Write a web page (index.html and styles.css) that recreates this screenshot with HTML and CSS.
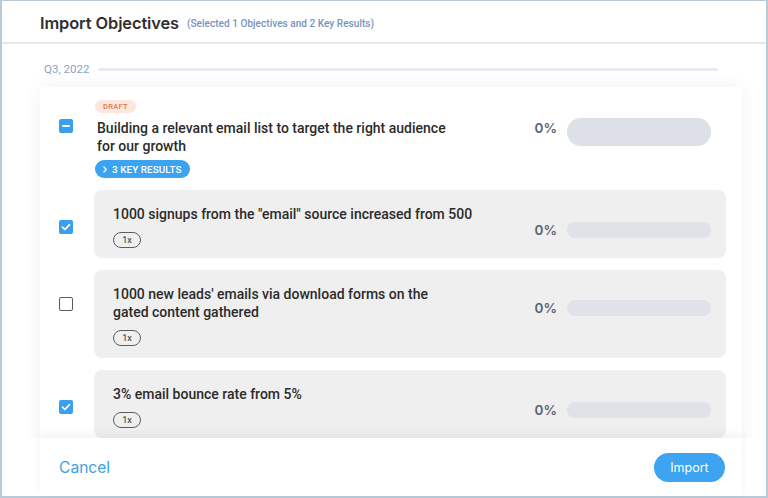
FILE: index.html
```html
<!DOCTYPE html>
<html>
<head>
<meta charset="utf-8">
<link rel="stylesheet" href="styles.css">
</head>
<body>
<div class="frame">
  <header class="header">
    <h1 class="title">Import Objectives</h1>
    <span class="subtitle">(Selected 1 Objectives and 2 Key Results)</span>
  </header>
  <main class="main">
    <div class="period">
      <span class="period-label">Q3, 2022</span>
      <span class="period-line"></span>
    </div>
    <section class="card">
      <div class="objective">
        <div class="obj-check"><span class="cb cb-ind"></span></div>
        <div class="obj-body">
          <span class="draft">DRAFT</span>
          <div class="obj-row">
            <p class="obj-text">Building a relevant email list to target the right audience for our growth</p>
            <div class="progress">
              <span class="pct">0%</span>
              <span class="bar bar-lg"></span>
            </div>
          </div>
          <span class="kr-pill"><svg class="chev" viewBox="0 0 6 8" width="5" height="7"><path d="M1 1l3 3-3 3" fill="none" stroke="#fff" stroke-width="1.4" stroke-linecap="round" stroke-linejoin="round"/></svg>3 KEY RESULTS</span>
        </div>
      </div>

      <div class="kr">
        <div class="kr-check c1"><span class="cb cb-on"><svg viewBox="0 0 14 14" width="14" height="14"><path d="M3.5 7.2l2.4 2.3 4.6-4.8" fill="none" stroke="#fff" stroke-width="1.7" stroke-linecap="round" stroke-linejoin="round"/></svg></span></div>
        <div class="kr-box">
          <div class="kr-left">
            <p class="kr-text">1000 signups from the "email" source increased from 500</p>
            <span class="mult">1x</span>
          </div>
          <div class="progress kr-progress">
            <span class="pct">0%</span>
            <span class="bar bar-sm"></span>
          </div>
        </div>
      </div>

      <div class="kr">
        <div class="kr-check c2"><span class="cb cb-off"></span></div>
        <div class="kr-box tall">
          <div class="kr-left">
            <p class="kr-text narrow">1000 new leads' emails via download forms on the gated content gathered</p>
            <span class="mult">1x</span>
          </div>
          <div class="progress kr-progress p2">
            <span class="pct">0%</span>
            <span class="bar bar-sm"></span>
          </div>
        </div>
      </div>

      <div class="kr">
        <div class="kr-check c1"><span class="cb cb-on"><svg viewBox="0 0 14 14" width="14" height="14"><path d="M3.5 7.2l2.4 2.3 4.6-4.8" fill="none" stroke="#fff" stroke-width="1.7" stroke-linecap="round" stroke-linejoin="round"/></svg></span></div>
        <div class="kr-box">
          <div class="kr-left">
            <p class="kr-text">3% email bounce rate from 5%</p>
            <span class="mult">1x</span>
          </div>
          <div class="progress kr-progress">
            <span class="pct">0%</span>
            <span class="bar bar-sm"></span>
          </div>
        </div>
      </div>
    </section>
  </main>
  <footer class="footer">
    <a class="cancel">Cancel</a>
    <button class="import">Import</button>
  </footer>
</div>
</body>
</html>
```

FILE: styles.css
```css
* { box-sizing: border-box; }
html, body { margin: 0; padding: 0; }
body {
  width: 768px;
  height: 498px;
  overflow: hidden;
  background: #fff;
  font-family: Roboto, "Liberation Sans", sans-serif;
}
.frame {
  width: 768px;
  height: 498px;
  border: 2px solid #b9c9d5;
  border-top-width: 1px;
  display: flex;
  flex-direction: column;
  background: #fff;
  position: relative;
}
.header {
  height: 43px;
  flex: none;
  border-bottom: 2px solid #e4e8ef;
  display: flex;
  align-items: center;
  padding-left: 38px;
  padding-top: 2px;
  gap: 8px;
}
.title {
  margin: 0;
  font-family: Inter, "Open Sans", sans-serif;
  font-weight: 600;
  font-size: 16.4px;
  color: #2f2f33;
  letter-spacing: -0.1px;
}
.subtitle {
  font-family: Roboto, sans-serif;
  font-weight: 500;
  font-size: 10.1px;
  color: #7a93bb;
  padding-top: 2px;
}
.main {
  flex: 1;
  overflow: hidden;
  padding: 0 24px 0 38px;
  position: relative;
}
.period {
  height: 43px;
  display: flex;
  align-items: center;
  padding-left: 4px;
  padding-top: 7px;
  gap: 9px;
}
.period-label {
  font-size: 11.5px;
  color: #8ea2c1;
}
.period-line {
  flex: 1;
  height: 3px;
  background: #e8ebf1;
  border-radius: 2px;
  margin-right: 24px;
}
.card {
  background: #fff;
  box-shadow: 0 0 18px rgba(0, 0, 0, 0.06);
  padding: 13px 16px 40px 0;
  display: flex;
  flex-direction: column;
  gap: 12px;
}
.objective {
  display: flex;
}
.obj-check {
  width: 54px;
  flex: none;
  padding-left: 19px;
  padding-top: 19px;
}
.obj-body {
  flex: 1;
  display: flex;
  flex-direction: column;
  align-items: flex-start;
  padding-left: 1px;
  padding-right: 15px;
}
.draft {
  display: inline-block;
  height: 13px;
  line-height: 13px;
  padding: 0 8px;
  border-radius: 7px;
  background: #fde7dd;
  color: #d6784f;
  font-size: 7.5px;
  font-weight: 500;
  letter-spacing: 0.3px;
}
.obj-row {
  align-self: stretch;
  display: flex;
  justify-content: space-between;
  align-items: flex-start;
  margin-top: 6px;
}
.obj-text {
  margin: 0;
  width: 362px;
  padding-left: 2px;
  font-size: 14px;
  font-weight: 500;
  line-height: 18px;
  color: #2b2b2b;
}
.progress {
  display: flex;
  align-items: center;
  gap: 10px;
}
.pct {
  font-family: Inter, "Open Sans", sans-serif;
  font-weight: 600;
  font-size: 13.5px;
  color: #5b6370;
  line-height: 18px;
}
.bar {
  display: block;
  width: 144px;
  background: #dde0e7;
}
.bar-lg {
  height: 28px;
  border-radius: 14px;
  margin-top: -1px;
}
.obj-row .progress { align-items: flex-start; }
.bar-sm {
  height: 16px;
  border-radius: 8px;
  background: #dfe2e9;
}
.kr-pill {
  display: inline-flex;
  align-items: center;
  gap: 4px;
  height: 18px;
  margin-top: 5px;
  padding: 0 9px 0 8px;
  border-radius: 9px;
  background: #3ca3f0;
  color: #fff;
  font-size: 9.8px;
  font-weight: 500;
  letter-spacing: 0.1px;
}
.chev { display: block; }
.cb {
  display: block;
  width: 14px;
  height: 14px;
  border-radius: 2px;
}
.cb svg { display: block; }
.cb-on { background: #3b9ff0; }
.cb-ind {
  background: #3b9ff0;
  position: relative;
}
.cb-ind::after {
  content: "";
  position: absolute;
  left: 3px;
  right: 3px;
  top: 6px;
  height: 2px;
  border-radius: 1px;
  background: #fff;
}
.cb-off {
  background: #fff;
  border: 1.5px solid #555a60;
}
.kr {
  display: flex;
}
.kr-check {
  width: 54px;
  flex: none;
  padding-left: 19px;
}
.kr-check.c1 { padding-top: 30px; }
.kr-check.c2 { padding-top: 27px; }
.kr-box {
  flex: 1;
  background: #efefef;
  border-radius: 8px;
  display: flex;
  justify-content: space-between;
  align-items: flex-start;
  padding: 15px 15px 10px 19px;
}
.kr-box.tall { padding-bottom: 12px; }
.kr-left {
  flex: 1;
  display: flex;
  flex-direction: column;
  align-items: flex-start;
}
.kr-text {
  margin: 0;
  max-width: 372px;
  font-size: 14px;
  font-weight: 500;
  line-height: 18px;
  color: #2b2b2b;
}
.kr-text.narrow { max-width: 345px; }
.mult {
  margin-top: 9px;
  display: inline-block;
  width: 28px;
  height: 16px;
  line-height: 14px;
  text-align: center;
  border: 1px solid #5a5e63;
  border-radius: 8px;
  font-size: 9px;
  font-weight: 500;
  color: #55595e;
}
.kr-progress { margin-top: 16px; }
.kr-progress.p2 { margin-top: 14px; }
.footer {
  flex: none;
  height: 58px;
  margin: 0 24px 0 38px;
  background: #fff;
  box-shadow: 0 -3px 8px rgba(0, 0, 0, 0.06);
  display: flex;
  align-items: center;
  justify-content: space-between;
  padding: 1px 17px 0 19px;
  position: relative;
  z-index: 2;
}
.cancel {
  font-family: Inter, "Open Sans", sans-serif;
  font-size: 15.6px;
  color: #3d9fe5;
}
.import {
  border: none;
  height: 29px;
  width: 71px;
  border-radius: 15px;
  background: #3ca4f0;
  color: #fff;
  font-family: Inter, "Open Sans", sans-serif;
  font-size: 12.5px;
  padding: 0;
}
```
